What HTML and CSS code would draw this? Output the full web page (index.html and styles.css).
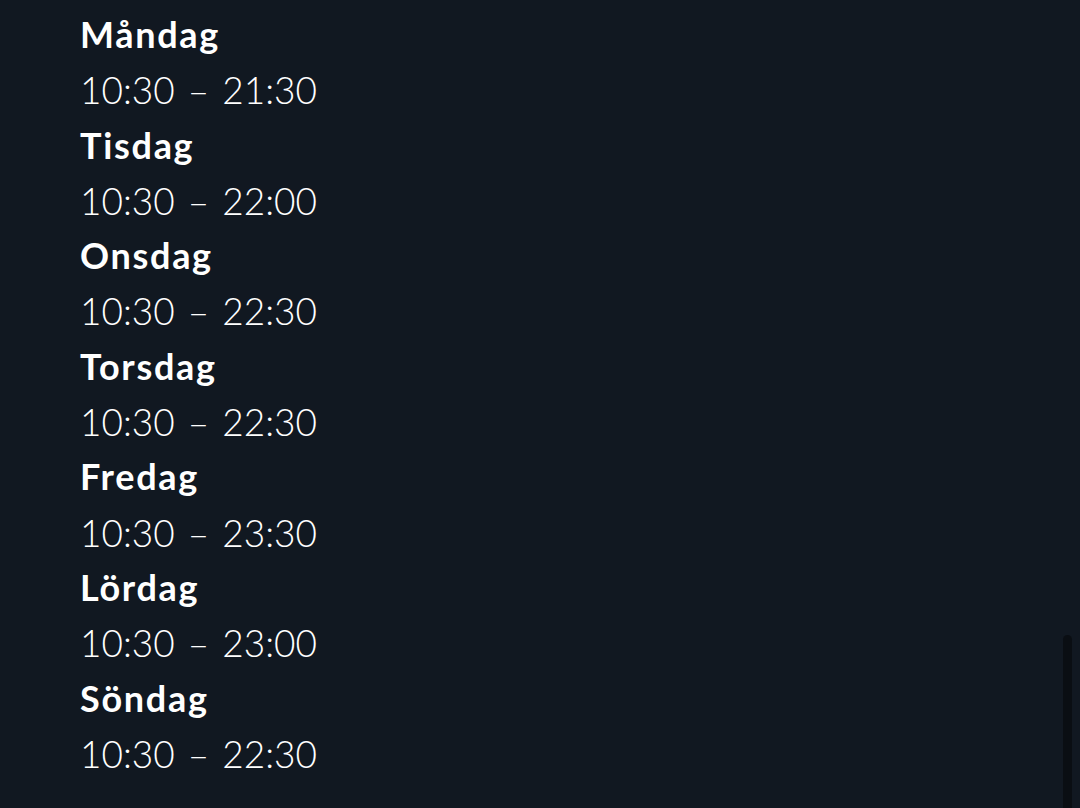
FILE: index.html
```html
<!DOCTYPE html>
<html lang="sv">
<head>
<meta charset="utf-8">
<link rel="stylesheet" href="styles.css">
</head>
<body>
<main class="hours">
  <div class="day">Måndag</div>
  <div class="time">10:30 – 21:30</div>
  <div class="day">Tisdag</div>
  <div class="time">10:30 – 22:00</div>
  <div class="day">Onsdag</div>
  <div class="time">10:30 – 22:30</div>
  <div class="day">Torsdag</div>
  <div class="time">10:30 – 22:30</div>
  <div class="day">Fredag</div>
  <div class="time">10:30 – 23:30</div>
  <div class="day">Lördag</div>
  <div class="time">10:30 – 23:00</div>
  <div class="day">Söndag</div>
  <div class="time">10:30 – 22:30</div>
</main>
<div class="scrollbar"></div>
</body>
</html>
```
FILE: styles.css
```css
html, body {
  margin: 0;
  padding: 0;
  background: #111821;
  height: 100%;
  overflow: hidden;
}
body {
  font-family: Lato, "Open Sans", sans-serif;
  color: #ffffff;
}
.hours {
  padding: 7px 0 0 80px;
  display: flex;
  flex-direction: column;
}
.day {
  font-size: 36px;
  font-weight: 700;
  line-height: 55.3px;
  letter-spacing: 1.7px;
}
.time {
  font-size: 37px;
  font-weight: 300;
  line-height: 55.3px;
  word-spacing: 3px;
}
.scrollbar {
  position: absolute;
  right: 8px;
  top: 635px;
  width: 9px;
  height: 180px;
  border-radius: 5px;
  background: #0a0e13;
}
```
